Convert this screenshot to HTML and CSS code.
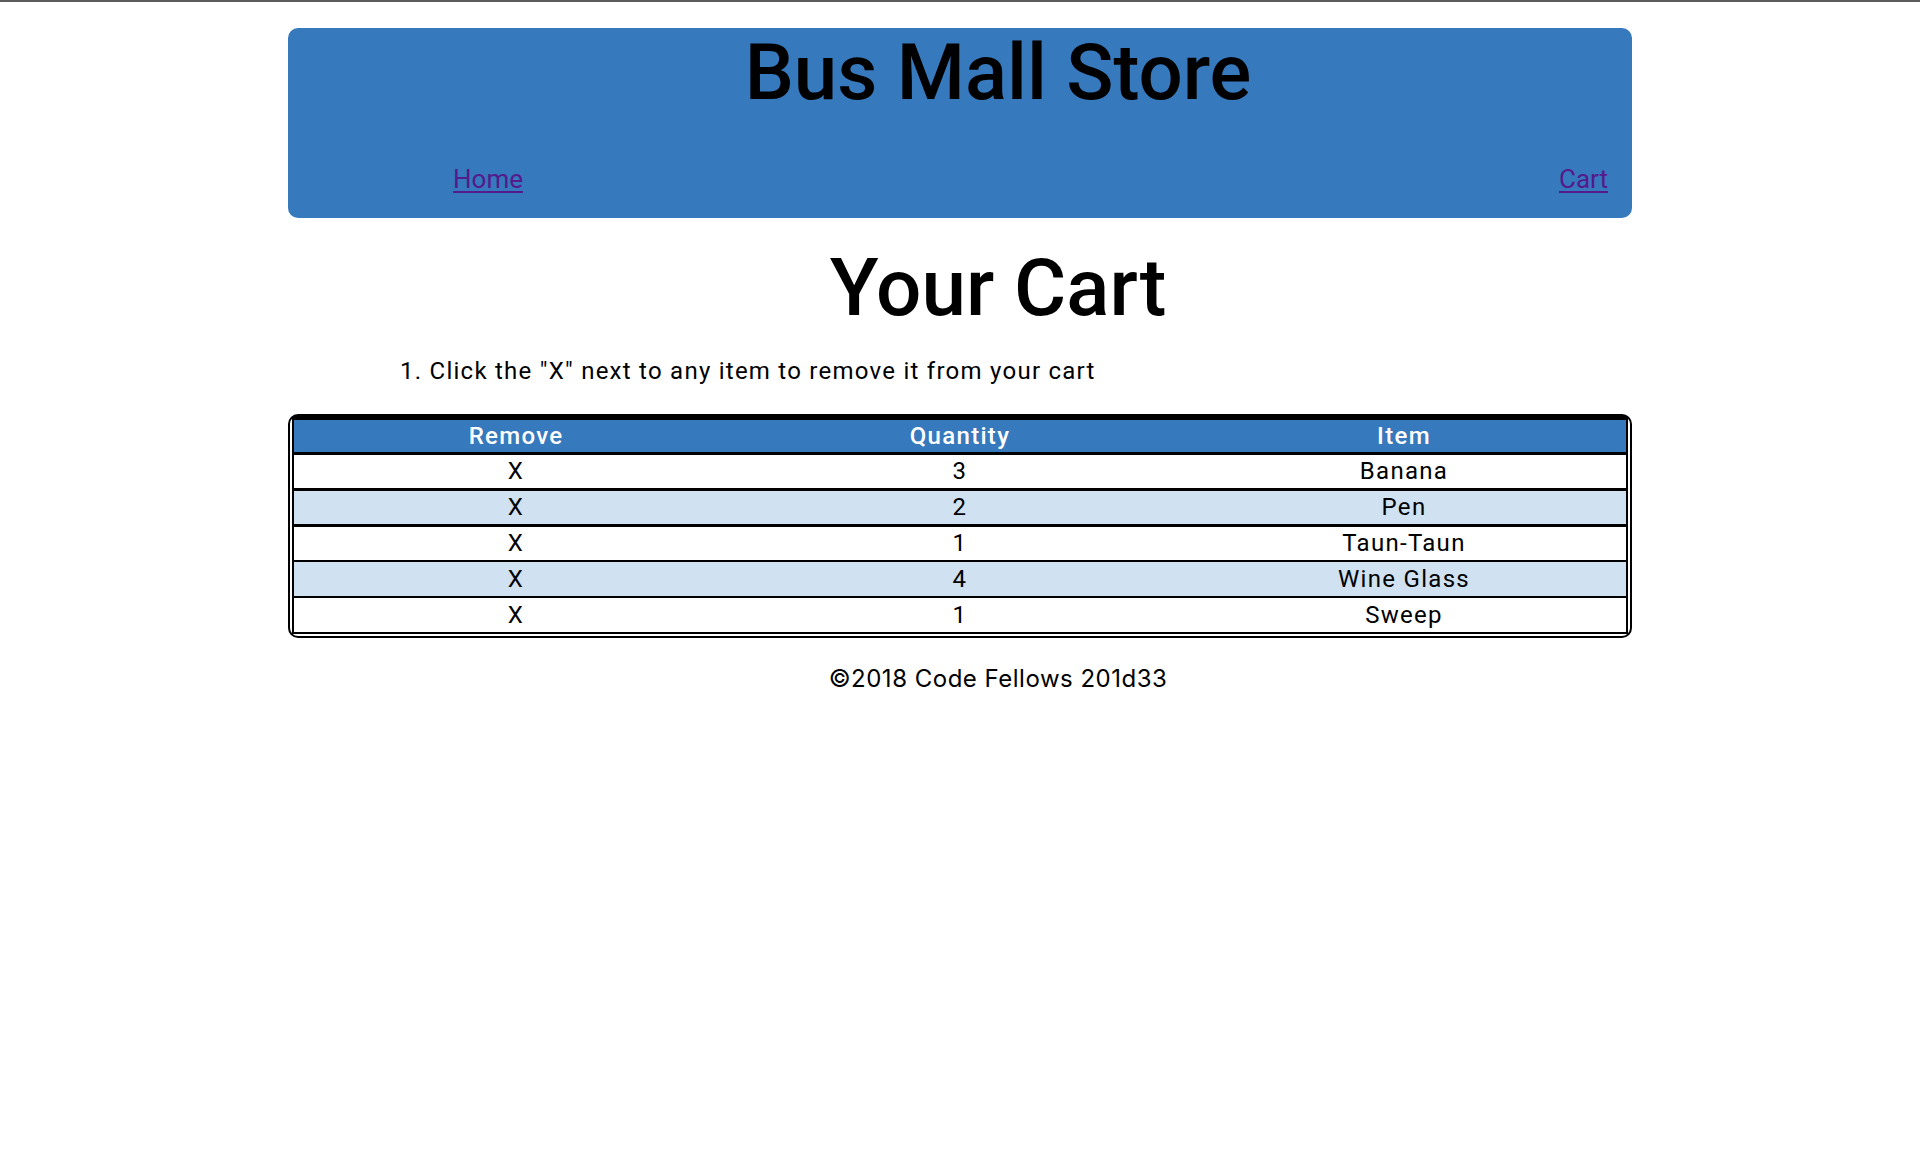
FILE: index.html
```html
<!DOCTYPE html>
<html lang="en">
<head>
<meta charset="utf-8">
<title>Bus Mall Store - Cart</title>
<link rel="stylesheet" href="styles.css">
</head>
<body>
<header class="site-header">
  <h1 class="site-title">Bus Mall Store</h1>
  <nav class="site-nav">
    <a href="#" class="nav-link">Home</a>
    <a href="#" class="nav-link">Cart</a>
  </nav>
</header>
<main class="main">
  <h2 class="page-title">Your Cart</h2>
  <ol class="instructions">
    <li>Click the "X" next to any item to remove it from your cart</li>
  </ol>
  <div class="cart-wrap">
    <table class="cart">
      <thead>
        <tr><th>Remove</th><th>Quantity</th><th>Item</th></tr>
      </thead>
      <tbody>
        <tr class="row-a"><td>X</td><td>3</td><td>Banana</td></tr>
        <tr class="row-b"><td>X</td><td>2</td><td>Pen</td></tr>
        <tr class="row-c"><td>X</td><td>1</td><td>Taun-Taun</td></tr>
        <tr class="row-d"><td>X</td><td>4</td><td>Wine Glass</td></tr>
        <tr class="row-e"><td>X</td><td>1</td><td>Sweep</td></tr>
      </tbody>
    </table>
  </div>
</main>
<footer class="site-footer">©2018 Code Fellows 201d33</footer>
</body>
</html>
```
FILE: styles.css
```css
html, body {
  background: #ffffff;
}
body {
  margin: 0;
  border-top: 2px solid #5c5c5e;
  font-family: Roboto, "Liberation Sans", sans-serif;
  color: #000;
}
.site-header {
  margin: 26px 288px 0;
  height: 190px;
  box-sizing: border-box;
  background: #3679bd;
  border-radius: 10px;
  padding-top: 5px;
}
.site-title {
  margin: 0;
  padding-left: 76px;
  text-align: center;
  font-size: 78px;
  line-height: 80px;
  font-weight: 500;
}
.site-nav {
  display: flex;
  justify-content: space-between;
  margin-top: 51px;
  padding: 0 24px 0 165px;
  font-size: 26px;
  line-height: 30px;
}
.nav-link {
  color: #551a8b;
  text-decoration: underline;
  text-underline-offset: 3px;
}
.main {
  margin: 0;
}
.page-title {
  margin: 30px 0 0;
  padding-left: 76px;
  text-align: center;
  font-size: 80px;
  line-height: 80px;
  font-weight: 500;
}
.instructions {
  margin: 29px 0 0 400px;
  padding: 0;
  list-style-position: inside;
  font-size: 24px;
  line-height: 28px;
  letter-spacing: 1.25px;
}
.cart-wrap {
  margin: 29px 288px 0;
  border: 2px solid #000;
  border-radius: 10px;
  padding: 0 2px 2px;
}
.cart {
  width: 100%;
  table-layout: fixed;
  border-collapse: separate;
  border-spacing: 0;
  border: 2px solid #000;
  border-top-width: 4px;
  font-size: 24px;
  letter-spacing: 1.3px;
}
.cart th {
  background: #3679bd;
  color: #fff;
  font-weight: 500;
  height: 32px;
  line-height: 32px;
  padding: 0;
  border-bottom: 3px solid #000;
}
.cart td {
  text-align: center;
  height: 33px;
  line-height: 33px;
  padding: 0;
}
.row-d td, .row-e td {
  height: 34px;
  line-height: 34px;
}
.row-a td, .row-b td {
  border-bottom: 3px solid #000;
}
.row-c td, .row-d td {
  border-bottom: 2px solid #000;
}
.row-b td, .row-d td {
  background: #d0e1f1;
}
.site-footer {
  margin-top: 27px;
  padding-left: 76px;
  text-align: center;
  font-family: Inter, "Liberation Sans", sans-serif;
  font-size: 24px;
  line-height: 28px;
  letter-spacing: 0.5px;
}
```
